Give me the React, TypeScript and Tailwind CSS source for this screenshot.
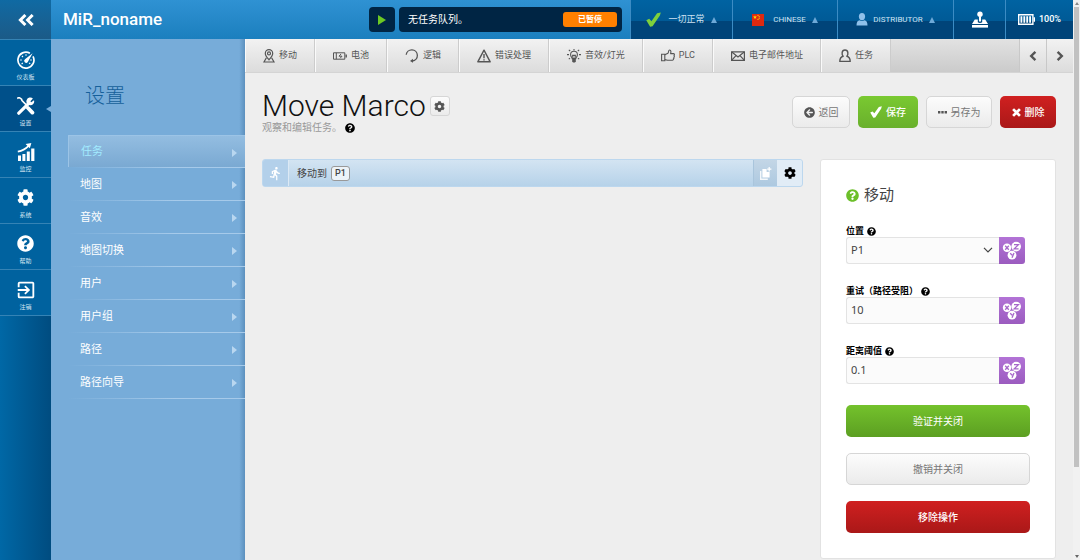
import { useState, type ReactNode } from "react";
import clsx from "clsx";
import { FaArrowCircleLeft, FaCog, FaQuestionCircle } from "react-icons/fa";
import { MdDirectionsRun, MdExitToApp } from "react-icons/md";

interface NavItem {
  label: string;
  icon: ReactNode;
}

function CheckIcon({ className }: { className?: string }) {
  return (
    <svg viewBox="0 0 16 16" className={className} fill="currentColor" aria-hidden="true">
      <path d="M0.3 8.8 3.4 7.2 5.8 9.8 11.8 1.4 15.8 0.4 14.8 3.8 7 15.2 4.4 15.8Z" />
    </svg>
  );
}

function GaugeIcon() {
  return (
    <svg viewBox="0 0 18 18" className="size-[18px]" fill="none" stroke="currentColor" aria-hidden="true">
      <path d="M12.9 2.2A8 8 0 1 0 16 5.4" strokeWidth="1.7" />
      <path d="M9 3.2v1.6M4.9 4.9l1.1 1.1M3.2 9h1.6M4.6 13l1.2-1M13.2 9h1.6M13.2 12.8l-1.1-1" strokeWidth="1.1" />
      <path d="M15.6 2.2 8 8.2A2 2 0 1 0 10.8 11Z" fill="currentColor" stroke="none" />
    </svg>
  );
}

function ToolsIcon() {
  return (
    <svg viewBox="0 0 18 18" className="size-[18px]" fill="none" stroke="currentColor" aria-hidden="true">
      <path d="M1.8 16.2 12 6.2" strokeWidth="3.2" strokeLinecap="round" />
      <path d="M15.9 1.5 13.4 4.2 14.2 5.2 17 3.2A3.9 3.9 0 1 1 15.9 1.5Z" fill="currentColor" stroke="none" />
      <path d="M0.3 1.6 1.8 0.3 4.6 2.2 5 3.6 10 8.6" strokeWidth="1.6" />
      <path d="M11 11 15.4 15.6" strokeWidth="3.8" strokeLinecap="round" />
    </svg>
  );
}

function ChartIcon() {
  return (
    <svg viewBox="0 0 18 18" className="size-[18px]" fill="currentColor" aria-hidden="true">
      <path d="M1 12.5h3V18H1zM5.4 11h3v7h-3zM9.8 8.6h3V18h-3zM14.2 5.6h3.2V18h-3.2z" />
      <path d="M0.8 8.6C5.6 7.8 8.6 6 11.6 2.9" fill="none" stroke="currentColor" strokeWidth="1.7" />
      <path d="M8.6 1 14.4 0 12.8 5.2Z" />
    </svg>
  );
}

const RAIL: NavItem[] = [
  { label: "仪表板", icon: <GaugeIcon /> },
  { label: "设置", icon: <ToolsIcon /> },
  { label: "监控", icon: <ChartIcon /> },
  { label: "系统", icon: <FaCog className="size-[17px]" /> },
  { label: "帮助", icon: <FaQuestionCircle className="size-[17px]" /> },
  { label: "注销", icon: <MdExitToApp className="size-[22px]" /> },
];

const MENU = ["任务", "地图", "音效", "地图切换", "用户", "用户组", "路径", "路径向导"];

// Outline icons of the action toolbar
const TABS: NavItem[] = [
  {
    label: "移动",
    icon: (
      <svg viewBox="0 0 12 14" className="h-[14px] w-3" fill="none" stroke="currentColor" strokeWidth="1.2">
        <path d="M6 10.8C4 8.4 2.3 6.6 2.3 4.4a3.7 3.7 0 0 1 7.4 0C9.7 6.6 8 8.4 6 10.8Z" />
        <circle cx="6" cy="4.4" r="1.5" />
        <path d="M3.4 8.8 1 13h10L8.6 8.8" />
      </svg>
    ),
  },
  {
    label: "电池",
    icon: (
      <svg viewBox="0 0 14 8" className="h-2 w-[14px]" fill="none" stroke="currentColor">
        <path d="M0.5 0.8h11.3v6.4H0.5zM3.3 0.8v6.4" />
        <path d="M13.2 2.4v3.2" strokeWidth="1.4" />
        <path d="M8 2 6 4.2h3L7.2 6.2" />
      </svg>
    ),
  },
  {
    label: "逻辑",
    icon: (
      <svg viewBox="0 0 14 14" className="size-[14px]" fill="none" stroke="currentColor" strokeWidth="1.3">
        <path d="M1.2 5.8A5.6 5.6 0 1 1 7.4 12" />
        <path d="M5 12 8 9.8v4Z" fill="currentColor" stroke="none" />
      </svg>
    ),
  },
  {
    label: "错误处理",
    icon: (
      <svg viewBox="0 0 14 14" className="size-[14px]" fill="none" stroke="currentColor" strokeWidth="1.4">
        <path d="M7 1.2 13.2 12.8H0.8Z" strokeLinejoin="round" />
        <path d="M7 5v4.2M7 10.2v1.2" />
      </svg>
    ),
  },
  {
    label: "音效/灯光",
    icon: (
      <svg viewBox="0 0 14 14" className="size-[14px]" fill="none" stroke="currentColor" strokeWidth="1.1">
        <path d="M5.2 9.6C5.2 8.4 3.6 7.8 3.6 5.7a3.4 3.4 0 0 1 6.8 0C10.4 7.8 8.8 8.4 8.8 9.6Z" />
        <path d="M6 9.4 5.6 6.4h2.8L8 9.4" />
        <path d="M5.2 10h3.6v2.2L8 13.6H6l-.8-1.4Z" fill="currentColor" stroke="none" />
        <path d="M0 5.6h2M12 5.6h2M1.8 0.8 3.2 2M12.2 0.8 10.8 2M7 0v1.4M1.8 10.2 3 9.2M12.2 10.2 11 9.2" />
      </svg>
    ),
  },
  {
    label: "PLC",
    icon: (
      <svg viewBox="0 0 14 13" className="h-[13px] w-[14px]" fill="none" stroke="currentColor" strokeWidth="1.1">
        <path d="M0.6 5.2h3.2v6.6H0.6z" />
        <path d="M3.8 5.8 7 4.2C7.6 3.4 7.4 1 8.6 1c1.6 0 1.4 2 1 3.6h2.8c1.2 0 1.2 1.4.6 1.8.6.6.4 1.6-.2 1.8.4.6.2 1.4-.4 1.6.2.8-.2 1.4-1 1.4H6.6L3.8 10.6" strokeLinejoin="round" />
      </svg>
    ),
  },
  {
    label: "电子邮件地址",
    icon: (
      <svg viewBox="0 0 14 10" className="h-[10px] w-[14px]" fill="none" stroke="currentColor" strokeWidth="1.2">
        <path d="M0.6 0.8h12.8v8.6H0.6Z" />
        <path d="M0.8 1 7 6 13.2 1M0.8 9.2 5 4.6M13.2 9.2 9 4.6" />
      </svg>
    ),
  },
  {
    label: "任务",
    icon: (
      <svg viewBox="0 0 12 14" className="h-[14px] w-3" fill="none" stroke="currentColor" strokeWidth="1.4">
        <path d="M4.2 7.2C2.6 6 2.4 1 6 1s3.4 5 1.8 6.2c2.4.6 3.4 1.8 3.4 5.2H0.8c0-3.4 1-4.6 3.4-5.2Z" strokeLinejoin="round" />
      </svg>
    ),
  },
];

function VariableButton({ label }: { label: string }) {
  return (
    <button
      type="button"
      aria-label={label}
      className="flex w-[26px] shrink-0 items-center justify-center rounded-r-[3px] bg-linear-to-b from-[#b273d6] to-[#9b5cbf] text-white"
    >
      <svg viewBox="0 0 20 20" className="size-5" aria-hidden="true">
        <g fill="white">
          <circle cx="5" cy="6.8" r="4.2" />
          <circle cx="14.2" cy="5.6" r="4.8" />
          <circle cx="10" cy="14.2" r="4.4" />
        </g>
        <g fill="none" stroke="#a768cb" strokeWidth="1.3">
          <path d="M3.2 4.8 6.8 8.8M6.8 4.8 3.2 8.8" />
          <path d="M12 3.6h4.4L12.2 7.8h4.4" />
          <path d="M8.2 12.2 10.2 14.2M12 12l-2 4.8" />
        </g>
      </svg>
    </button>
  );
}

function Field({ id, label, children }: { id: string; label: string; children: ReactNode }) {
  return (
    <div className="mb-[21px] mr-[5px]">
      <div className="flex h-3 items-center gap-[3px] text-[9px] leading-3 text-black">
        <label htmlFor={id} className="font-bold">{label}</label>
        <FaQuestionCircle className="size-[9px]" />
      </div>
      <div className="flex h-[27px]">
        {children}
        <VariableButton label={`${label} 变量`} />
      </div>
    </div>
  );
}

const fieldClass =
  "w-full min-w-0 rounded-l-[3px] border border-r-0 border-[#e3e3e3] bg-[#fbfbfb] px-1 font-['Noto_Sans','Noto_Sans_CJK_SC',sans-serif] text-[11px] text-[#444] outline-none";
const lightButton = "border border-[#d6d6d6] bg-linear-to-b from-[#fcfcfc] to-[#ebebeb] text-[#777]";
const headerCell = "flex h-full items-center justify-center border-l border-[#3c8cc4]";

function Rail() {
  return (
    <nav className="flex w-[51px] shrink-0 flex-col bg-linear-to-r from-[#0068a6] to-[#004c80] text-white">
      <button
        type="button"
        aria-label="收起"
        className="flex h-[39px] items-center justify-center bg-linear-to-b from-[#0f6aa3] to-[#1b5a87]"
      >
        <svg viewBox="0 0 16 12" className="h-3 w-4" fill="none" stroke="currentColor" strokeWidth="3" aria-hidden="true">
          <path d="M7.4 1 2.4 6 7.4 11M14.6 1 9.6 6 14.6 11" />
        </svg>
      </button>
      {RAIL.map((item, i) => (
        <a
          key={item.label}
          href="#"
          className={clsx(
            "relative flex h-[46px] flex-col items-center border-t border-[#3583b5] pt-[10px]",
            i === 1 ? "bg-[#00508a]" : "bg-[#00629f]",
          )}
        >
          <span className="flex h-[19px] items-center">{item.icon}</span>
          <span className="mt-1 text-[6px] leading-[7px] text-[#d5e6f2]">{item.label}</span>
          {i === 1 && (
            <span className="absolute right-0 top-5 border-y-[3px] border-r-[5px] border-y-transparent border-r-[#77acd9]" />
          )}
        </a>
      ))}
      <div className="border-t border-[#3583b5]" />
    </nav>
  );
}

function Header() {
  return (
    <header className="flex h-[39px] shrink-0 items-center bg-linear-to-b from-[#2f92d3] to-[#1b7fbe] text-white">
      <h1 className="flex-1 pl-3 text-[17px] font-medium">MiR_noname</h1>
      <button type="button" aria-label="开始" className="mr-1 flex h-[25px] w-[26px] items-center justify-center rounded-[4px] bg-[#002544]">
        <span className="border-y-[5px] border-l-[8px] border-y-transparent border-l-[#6cc824]" />
      </button>
      <div className="mr-2 flex h-[25px] w-[223px] items-center justify-between rounded-[4px] bg-[#002544] pl-[9px] pr-[5px]">
        <span className="text-[10px]">无任务队列。</span>
        <span className="w-[54px] rounded-[3px] bg-[#ff8000] text-center text-[8px] font-bold leading-[15px]">已暂停</span>
      </div>
      <div className="flex h-full bg-linear-to-b from-[#0063a2] from-0% via-[#005a96] via-54% to-[#004479] to-55% text-[9px] text-[#cfe2f2]">
        <button type="button" className={clsx(headerCell, "w-[102px]")}>
          <CheckIcon className="mr-[7px] size-[15px] text-[#7ed03c]" />
          一切正常
          <UpMark />
        </button>
        <button type="button" className={clsx(headerCell, "w-[105px]")}>
          <svg viewBox="0 0 12 12" className="mr-[9px] size-3" aria-hidden="true">
            <path fill="#de2910" d="M0 0h12v12H0z" />
            <g fill="#ffde00">
              <path d="M3 1.2 3.5 2.6H5L3.8 3.5 4.3 5 3 4.1 1.7 5 2.2 3.5 1 2.6h1.5Z" />
              <circle cx="6" cy="1.4" r=".6" />
              <circle cx="7.2" cy="2.6" r=".6" />
              <circle cx="7.2" cy="4.2" r=".6" />
              <circle cx="6" cy="5.4" r=".6" />
            </g>
          </svg>
          <span className="text-[8px]">CHINESE</span>
          <UpMark />
        </button>
        <button type="button" className={clsx(headerCell, "w-[116px]")}>
          <svg viewBox="0 0 12 13" className="mr-[5px] h-[13px] w-3" fill="#8fc0ea" aria-hidden="true">
            <ellipse cx="6" cy="3.6" rx="3.1" ry="3.6" />
            <path d="M0.5 12.4c0-3.6 1.4-5 3-5.2 1.6 1.1 3.4 1.1 5 0 1.6.2 3 1.6 3 5.2Z" />
          </svg>
          <span className="text-[8px]">DISTRIBUTOR</span>
          <UpMark />
        </button>
        <button type="button" aria-label="操纵杆" className={clsx(headerCell, "w-[52px] text-white")}>
          <svg viewBox="0 0 18 18" className="size-[18px]" fill="currentColor" aria-hidden="true">
            <circle cx="9" cy="3.3" r="2.7" />
            <path d="M8 5.4h2v5H8z" />
            <path d="M3.8 8.4h3v2.8c1.2 1 3.2 1 4.4 0V8.4h3l2.8 4.6H1Z" />
            <path d="M1 14h16v2.6H1z" />
          </svg>
        </button>
        <div className={clsx(headerCell, "w-[68px] gap-1 font-medium text-white")}>
          <svg viewBox="0 0 17 11" className="h-[11px] w-[17px]" fill="none" stroke="currentColor" aria-hidden="true">
            <path d="M0.7 0.7h14.2v9.6H0.7z" strokeWidth="1.4" />
            <path d="M16.3 3.2v4.6" strokeWidth="1.4" />
            <path d="M3.4 2.2v6.6M6.3 2.2v6.6M9.2 2.2v6.6M12.1 2.2v6.6" strokeWidth="1.8" />
          </svg>
          100%
        </div>
      </div>
    </header>
  );
}

function UpMark() {
  return <span className="ml-[6px] border-x-[3px] border-b-[6px] border-x-transparent border-b-[#6ea9d8]" />;
}

function Sidebar() {
  return (
    <aside className="w-[194px] shrink-0 bg-[#77acd9] bg-linear-to-r from-transparent from-97% to-[#5c90be] pl-[17px] text-white">
      <h2 className="h-24 pl-[17px] pt-[43px] text-[20px] font-light leading-7 text-[#16609a]">设置</h2>
      {MENU.map((item, i) => (
        <a key={item} href="#" className="block">
          <span
            className={clsx(
              "flex h-8 items-center justify-between pl-3 pr-2 pt-[2px] text-[11px]",
              i === 0 && "border-l border-t border-[#9cc4e6] bg-linear-to-b from-[#93bde1] to-[#7aa9d2] text-[#a2ebff]",
            )}
          >
            {item}
            <span className="border-y-[4px] border-l-[5px] border-y-transparent border-l-[#b9d7f0]" />
          </span>
          <span className="block h-px bg-linear-to-r from-[#77acd9] to-[#a6caea] to-60%" />
        </a>
      ))}
    </aside>
  );
}

function Chevron({ direction }: { direction: "left" | "right" }) {
  return (
    <svg viewBox="0 0 8 10" className="h-[10px] w-2" fill="none" stroke="currentColor" strokeWidth="2.4" aria-hidden="true">
      <path d={direction === "left" ? "M6.4 0.9 2.2 5 6.4 9.1" : "M1.6 0.9 5.8 5 1.6 9.1"} />
    </svg>
  );
}

function Toolbar() {
  const arrow = "flex w-[27px] items-center justify-center border-l border-[#c8c8c8] text-[#555]";
  return (
    <div className="flex h-[34px] border-b border-[#d4d4d4] bg-linear-to-b from-[#f2f2f2] to-[#dcdcdc] text-[9px] text-[#555]">
      {TABS.map((tab) => (
        <button
          key={tab.label}
          type="button"
          className="flex shrink-0 items-center gap-1 border-l border-r border-l-[#fafafa] border-r-[#cccccc] px-[17px]"
        >
          {tab.icon}
          {tab.label}
        </button>
      ))}
      <div className="flex-1 bg-linear-to-b from-[#e2e2e2] to-[#cbcbcb]" />
      <button type="button" aria-label="上一页" className={arrow}>
        <Chevron direction="left" />
      </button>
      <button type="button" aria-label="下一页" className={arrow}>
        <Chevron direction="right" />
      </button>
    </div>
  );
}

function ActionPanel() {
  const [position, setPosition] = useState("P1");
  const [retries, setRetries] = useState("10");
  const [distance, setDistance] = useState("0.1");
  const wide = "h-8 w-full rounded-[5px] text-[10px]";

  return (
    <section className="w-[236px] shrink-0 rounded-[3px] border border-[#e2e2e2] bg-white px-[25px] pb-[25px] pt-6">
      <h3 className="mb-[19px] flex items-center gap-[5px] text-[15px] leading-[22px] text-[#444]">
        <FaQuestionCircle className="size-[13px] text-[#6cbf2a]" />
        移动
      </h3>
      <Field id="position" label="位置">
        <div className="relative flex flex-1">
          <select
            id="position"
            value={position}
            onChange={(e) => setPosition(e.target.value)}
            className={clsx(fieldClass, "appearance-none")}
          >
            <option>P1</option>
          </select>
          <svg viewBox="0 0 10 6" className="pointer-events-none absolute right-[6px] top-[10px] h-[6px] w-[10px]" fill="none" stroke="#444" strokeWidth="1.2">
            <path d="M1 0.8 5 5 9 0.8" />
          </svg>
        </div>
      </Field>
      <Field id="retries" label="重试（路径受阻）">
        <input id="retries" value={retries} onChange={(e) => setRetries(e.target.value)} className={fieldClass} />
      </Field>
      <Field id="distance" label="距离阈值">
        <input id="distance" value={distance} onChange={(e) => setDistance(e.target.value)} className={fieldClass} />
      </Field>
      <div className="flex flex-col gap-4">
        <button type="button" className={clsx(wide, "bg-linear-to-b from-[#74c22c] to-[#5c9f22] text-white")}>
          验证并关闭
        </button>
        <button type="button" className={clsx(wide, lightButton)}>
          撤销并关闭
        </button>
        <button type="button" className={clsx(wide, "bg-linear-to-b from-[#d02020] to-[#aa1818] font-medium text-white")}>
          移除操作
        </button>
      </div>
    </section>
  );
}

function Mission() {
  const button = "flex h-8 items-center justify-center gap-1 rounded-[5px] text-[10px]";
  return (
    <main className="flex-1 px-[17px]">
      <div className="flex h-[86px] justify-between">
        <div className="pt-[17px]">
          <div className="flex items-center gap-1">
            <h2 className="text-[26px] font-light leading-8 text-[#111] sm:text-[30px] sm:leading-8">Move Marco</h2>
            <button type="button" aria-label="编辑" className={clsx("flex size-5 items-center justify-center rounded-[3px]", lightButton)}>
              <FaCog className="size-[11px] text-[#555]" />
            </button>
          </div>
          <p className="flex items-center gap-[3px] text-[10px] leading-3 text-[#999]">
            观察和编辑任务。
            <FaQuestionCircle className="size-[10px] text-black" />
          </p>
        </div>
        <div className="flex gap-2 pt-[23px]">
          <button type="button" className={clsx(button, lightButton, "w-[58px]")}>
            <FaArrowCircleLeft className="size-[11px] text-[#555]" />
            返回
          </button>
          <button type="button" className={clsx(button, "w-[60px] bg-linear-to-b from-[#7ac931] to-[#69b02c] font-medium text-white")}>
            <CheckIcon className="size-3" />
            保存
          </button>
          <button type="button" className={clsx(button, lightButton, "w-[66px]")}>
            <svg viewBox="0 0 9 3" className="h-[3px] w-[9px]" fill="#555" aria-hidden="true">
              <path d="M0 0h2.4v2.4H0zM3.3 0h2.4v2.4H3.3zM6.6 0H9v2.4H6.6z" />
            </svg>
            另存为
          </button>
          <button type="button" className={clsx(button, "w-14 bg-linear-to-b from-[#d02020] to-[#aa1818] font-medium text-white")}>
            <svg viewBox="0 0 10 10" className="size-[9px]" stroke="currentColor" strokeWidth="3" aria-hidden="true">
              <path d="M1.2 1.2 8.8 8.8M8.8 1.2 1.2 8.8" />
            </svg>
            删除
          </button>
        </div>
      </div>
      <div className="flex items-start gap-[17px]">
        <div className="flex h-7 flex-1 items-stretch overflow-hidden rounded-[3px] border border-[#bcd7ee] bg-linear-to-b from-[#d3e4f2] to-[#b6d2e9]">
          <div className="flex w-[26px] items-center justify-center border-r border-[#dce9f5] bg-[#b3d0ea] text-white">
            <MdDirectionsRun className="size-[15px]" />
          </div>
          <div className="flex flex-1 items-center gap-1 pl-2 text-[10px] text-[#444]">
            移动到
            <button type="button" className="rounded-[3px] border border-[#999] bg-[#edf3f8] px-[3px] text-[9px] font-medium leading-[13px]">
              P1
            </button>
          </div>
          <button
            type="button"
            aria-label="复制"
            className="flex w-6 items-center justify-center border-l border-[#a9c5dc] bg-linear-to-b from-[#c3d6e6] to-[#adc9e0] text-white"
          >
            <svg viewBox="0 0 13 13" className="size-[13px]" fill="currentColor" aria-hidden="true">
              <path d="M3.4 2h4.2v3h3v5.6H3.4z" />
              <path d="M1 4h1.4v7.6h6.4V13H1z" opacity=".85" />
              <path d="M9.6 0h1.2v1.6h1.6v1.2h-1.6v1.6H9.6V2.8H8.2V1.6h1.4z" />
            </svg>
          </button>
          <button type="button" aria-label="设置操作" className="flex w-[25px] items-center justify-center bg-[#e1ecf6] text-black">
            <FaCog className="size-3" />
          </button>
        </div>
        <ActionPanel />
      </div>
    </main>
  );
}

export default function App() {
  return (
    <div className="flex min-h-screen bg-[#eeeeee] font-[Roboto,'Noto_Sans_CJK_SC',sans-serif]">
      <Rail />
      <div className="flex min-w-0 flex-1 flex-col">
        <Header />
        <div className="flex flex-1">
          <Sidebar />
          <div className="flex min-w-0 flex-1 flex-col">
            <Toolbar />
            <Mission />
          </div>
        </div>
      </div>
      <div className="flex w-[7px] shrink-0 flex-col items-center bg-[#f1f1f1] py-[2px]" aria-hidden="true">
        <span className="mb-[2px] border-x-[2px] border-b-[3px] border-x-transparent border-b-[#888]" />
        <span className="w-[5px] grow-[84] bg-[#c1c1c1]" />
        <span className="grow-[16]" />
        <span className="border-x-[2px] border-t-[3px] border-x-transparent border-t-[#666]" />
      </div>
    </div>
  );
}
